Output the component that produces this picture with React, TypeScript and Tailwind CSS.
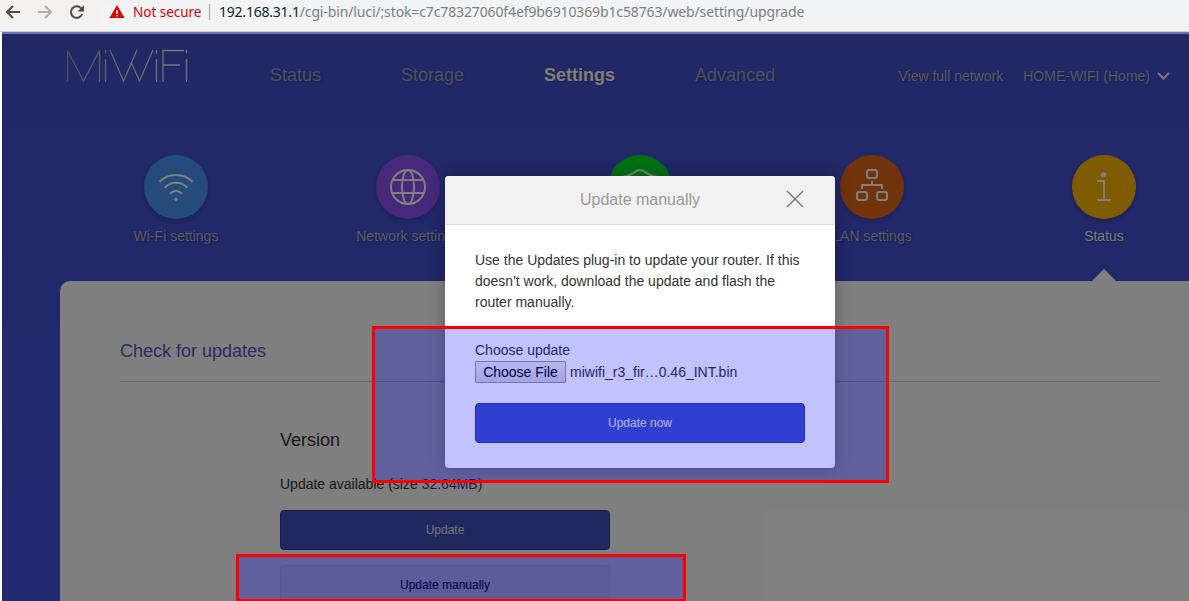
import React from "react";

const WifiIcon = () => (
  <svg width="64" height="64" viewBox="0 0 64 64" fill="none" stroke="#fff" strokeWidth="2">
    <path d="M15.5 26.700C24.5 17.700 39.500 17.700 48.500 26.700M20.500 32.700C27 26.200 37 26.200 43.500 32.700M26 38.700C29.500 35.200 34.500 35.200 38 38.700" />
    <circle cx="32" cy="44.300" r="1.700" fill="#fff" stroke="none" />
  </svg>
);

const GlobeIcon = () => (
  <svg width="64" height="64" viewBox="0 0 64 64" fill="none" stroke="#fff" strokeWidth="2">
    <circle cx="32" cy="32" r="17" />
    <path d="M17 25h30M17 38h30" />
    <ellipse cx="32" cy="32" rx="6" ry="17" />
  </svg>
);

const ShieldIcon = () => (
  <svg width="64" height="64" viewBox="0 0 64 64" fill="none" stroke="#fff" strokeWidth="2">
    <path d="M16 21.500C23 21.500 27 15 32 15s9 6.500 16 6.500v10c0 9-8 15-16 18c-8-3-16-9-16-18z" />
  </svg>
);

const LanIcon = () => (
  <svg width="64" height="64" viewBox="0 0 64 64" fill="none" stroke="#fff" strokeWidth="2">
    <rect x="27" y="15" width="10" height="8" rx="2" />
    <rect x="17" y="37" width="10" height="8" rx="2" />
    <rect x="37" y="37" width="10" height="8" rx="2" />
    <path d="M32 26v4M22 34v-4h20v4" />
  </svg>
);

const InfoIcon = () => (
  <svg width="64" height="64" viewBox="0 0 64 64" fill="none" stroke="#fff" strokeWidth="2">
    <circle cx="31.500" cy="19.500" r="2.600" fill="#fff" stroke="none" />
    <path d="M25 26h7v19M25 45h14" />
  </svg>
);

const sections = [
  { label: "Wi-Fi settings", icon: <WifiIcon />, color: "bg-[#4896f4]" },
  { label: "Network settings", icon: <GlobeIcon />, color: "bg-[#9050f4]" },
  { label: "Security", icon: <ShieldIcon />, color: "bg-[#00e028]" },
  { label: "LAN settings", icon: <LanIcon />, color: "bg-[#e06618]" },
  { label: "Status", icon: <InfoIcon />, color: "bg-[#ffb600]", active: true },
];

function Toolbar() {
  return (
    <div className="flex h-[31px] shrink-0 items-start bg-[#f2f1f0] font-['Noto_Sans',sans-serif] text-[14px] leading-[24px]">
      <svg className="h-[26px] w-[100px] shrink-0" viewBox="0 0 100 26" fill="none" strokeWidth="2">
        <path d="M20 12H7M13 6L7 12L13 18" stroke="#4b4d50" />
        <path d="M38 12H51M45 6L51 12L45 18" stroke="#adadac" />
        <path d="M81.200 8.300A5.800 5.800 0 1 0 82.200 14" stroke="#4b4d50" />
        <path d="M84 5v6.500h-6.500z" fill="#4b4d50" />
      </svg>
      <div className="flex h-[26px] flex-1 items-start rounded-l-full bg-[#f1f3f4]">
        <svg className="ml-[9px] h-6 w-4 shrink-0" viewBox="0 0 16 24">
          <path d="M8 5L15.500 18H.500Z" fill="#e00000" />
          <path d="M8 10v4M8 15v1.500" stroke="#fff" strokeWidth="1.500" />
        </svg>
        <span className="ml-2 w-[69px] whitespace-nowrap text-[13.500px] tracking-[-0.020px] text-[#dd0008]">Not secure</span>
        <span className="ml-[7px] mt-1 h-4 w-px bg-[#9a9da1]" />
        <span className="ml-[9px] whitespace-nowrap tracking-[-0.125px] text-[#7b7f84]">
          <span className="tracking-[-0.220px] text-[#202124]">192.168.31.1</span>/cgi-bin/luci/;stok=c7c78327060f4ef9b6910369b1c58763/web/setting/upgrade
        </span>
      </div>
    </div>
  );
}

function Header() {
  return (
    <header className="flex h-[121px] items-start whitespace-nowrap text-[#aeb1c0]">
      <svg className="ml-[64px] mt-[15px] h-[36px] w-[124px] shrink-0" viewBox="0 0 124 36" fill="none" strokeWidth="1.300">
        <defs>
          <linearGradient id="logo" gradientUnits="userSpaceOnUse" x1="0" x2="124" y1="0" y2="0">
            <stop stopColor="#9a9cb8" />
            <stop offset=".5" stopColor="#d5d5d8" />
            <stop offset="1" stopColor="#f2f0e8" />
          </linearGradient>
        </defs>
        <path
          stroke="url(#logo)"
          d="M1.500 33V1.500L17.500 32L33.500 1.500V33M39.500 10V33M39.500 1V4.500M44 1L57.500 32L71 1M65 13L73.500 32L87 1M90.500 10V33M90.500 1V4.500M97 33V1.500H118M97 16H114M120.500 10V33M120.500 1V4.500"
        />
      </svg>
      <nav className="ml-[80px] mt-[31px] flex gap-20 text-[18px] leading-5 [text-shadow:1px_1px_2px_rgba(0,0,0,0.25)]">
        <span className="text-[#9da0bc]">Status</span>
        <span className="text-[#9da0bc]">Storage</span>
        <span className="font-bold text-[#fffdf4]">Settings</span>
        <span className="text-[#9da0bc]">Advanced</span>
      </nav>
      <div className="ml-auto mr-[19px] mt-[32px] flex items-center gap-5 text-[14px] leading-5 [text-shadow:1px_1px_2px_rgba(0,0,0,0.3)]">
        <span>View full network</span>
        <span className="flex items-center gap-[7px]">
          HOME-WIFI (Home)
          <svg width="13" height="9" viewBox="0 0 13 9" fill="none" stroke="#eeede8" strokeWidth="2">
            <path d="M1 1L6.500 6.500L12 1" />
          </svg>
        </span>
      </div>
    </header>
  );
}

function Sections() {
  return (
    <div className="ml-[58px] flex h-[126px] w-[1160px]">
      {sections.map((s) => (
        <div key={s.label} className="flex w-[232px] shrink-0 flex-col items-center">
          <div className={"size-16 rounded-full shadow-[0_2px_4px_rgba(0,0,0,0.2)] " + s.color}>{s.icon}</div>
          <span
            className={
              "mt-2 text-[14px] leading-[18px] [text-shadow:1px_1px_2px_rgba(0,0,0,0.4)] " +
              (s.active ? "text-[#f0f0f4]" : "text-[#b2b5ca]")
            }
          >
            {s.label}
          </span>
          {s.active && (
            <svg className="mt-auto" width="24" height="12" viewBox="0 0 24 12">
              <path d="M12 0L24 12H0Z" fill="#fff" />
            </svg>
          )}
        </div>
      ))}
    </div>
  );
}

function UpdatesPanel() {
  return (
    <main className="ml-[58px] h-[400px] rounded-tl-[10px] bg-white pl-[60px] pt-[58px]">
      <h2 className="w-[1040px] border-b border-[#d4d4d4] pb-[18px] text-[18px] leading-6 text-[#4c5bc8]">
        Check for updates
      </h2>
      <div className="ml-[160px] mt-[46px] w-[330px]">
        <h3 className="text-[18px] leading-6 text-[#333]">Version</h3>
        <p className="mt-[22px] text-[14px] leading-5 text-[#333]">
          Update available (size <span className="text-[#4826bd]">32.64MB</span>)
        </p>
        <button className="mt-4 block h-10 w-full rounded border border-[#3434aa] bg-[#4150be] text-[12px] text-[#e4e4ee]">
          Update
        </button>
        <button className="mt-[15px] block h-10 w-full rounded border border-[#e8e8e8] bg-[#f4f4f4] text-[12px] text-black">
          Update manually
        </button>
      </div>
    </main>
  );
}

function UpdateDialog() {
  return (
    <div className="absolute left-[443px] top-[142px] h-[292px] w-[390px] rounded bg-white shadow-[0_0_16px_rgba(0,0,0,0.28)]">
      <div className="relative flex h-[49px] items-center justify-center rounded-t border-b border-[#ddd] bg-[#f1f1f1] pb-px text-[16px] text-[#999]">
        Update manually
        <svg className="absolute right-[31px] top-[14px]" width="18" height="18" viewBox="0 0 18 18" fill="none" stroke="#777" strokeWidth="1.400">
          <path d="M1 1L17 17M17 1L1 17" />
        </svg>
      </div>
      <div className="px-[30px] pt-[25px] text-[14px] leading-[21px] text-[#333]">
        <p>
          Use the Updates plug-in to update your router. If this
          <br />
          doesn't work, download the update and flash the
          <br />
          router manually.
        </p>
        <p className="mt-[27px]">Choose update</p>
        <div className="flex h-[22px] items-center">
          <button className="h-[22px] w-[91px] rounded-[1px] border border-[#999] bg-linear-to-b from-[#efefef] to-[#d8d8d8] leading-5 text-black">
            Choose File
          </button>
          <span className="ml-1">miwifi_r3_fir…0.46_INT.bin</span>
        </div>
        <button className="mt-5 block h-10 w-full rounded border border-[#3a36aa] bg-[#4053c1] text-[12px] text-[#eeeef8]">
          Update now
        </button>
      </div>
    </div>
  );
}

export default function App() {
  return (
    <div className="relative flex h-[601px] w-[1189px] flex-col overflow-hidden bg-white font-['Liberation_Sans',sans-serif]">
      <Toolbar />
      <div className="h-px shrink-0 bg-[#cfcdca]" />
      <div className="ml-[2px] h-[2px] shrink-0 bg-[#6a73b5]" />
      <div className="relative ml-[2px] h-[567px] overflow-hidden bg-linear-to-b from-[#444ecc] to-[#4457e2]">
        <Header />
        <Sections />
        <UpdatesPanel />
        <div className="absolute inset-0 bg-black/50" />
        <UpdateDialog />
      </div>
      <div className="absolute left-[372px] top-[326px] h-[157px] w-[517px] border-[3px] border-[#f00] bg-[#0000ff]/24" />
      <div className="absolute left-[236px] top-[554px] h-[47px] w-[450px] border-[3px] border-b-2 border-[#f00] bg-[#0000ff]/24" />
    </div>
  );
}
